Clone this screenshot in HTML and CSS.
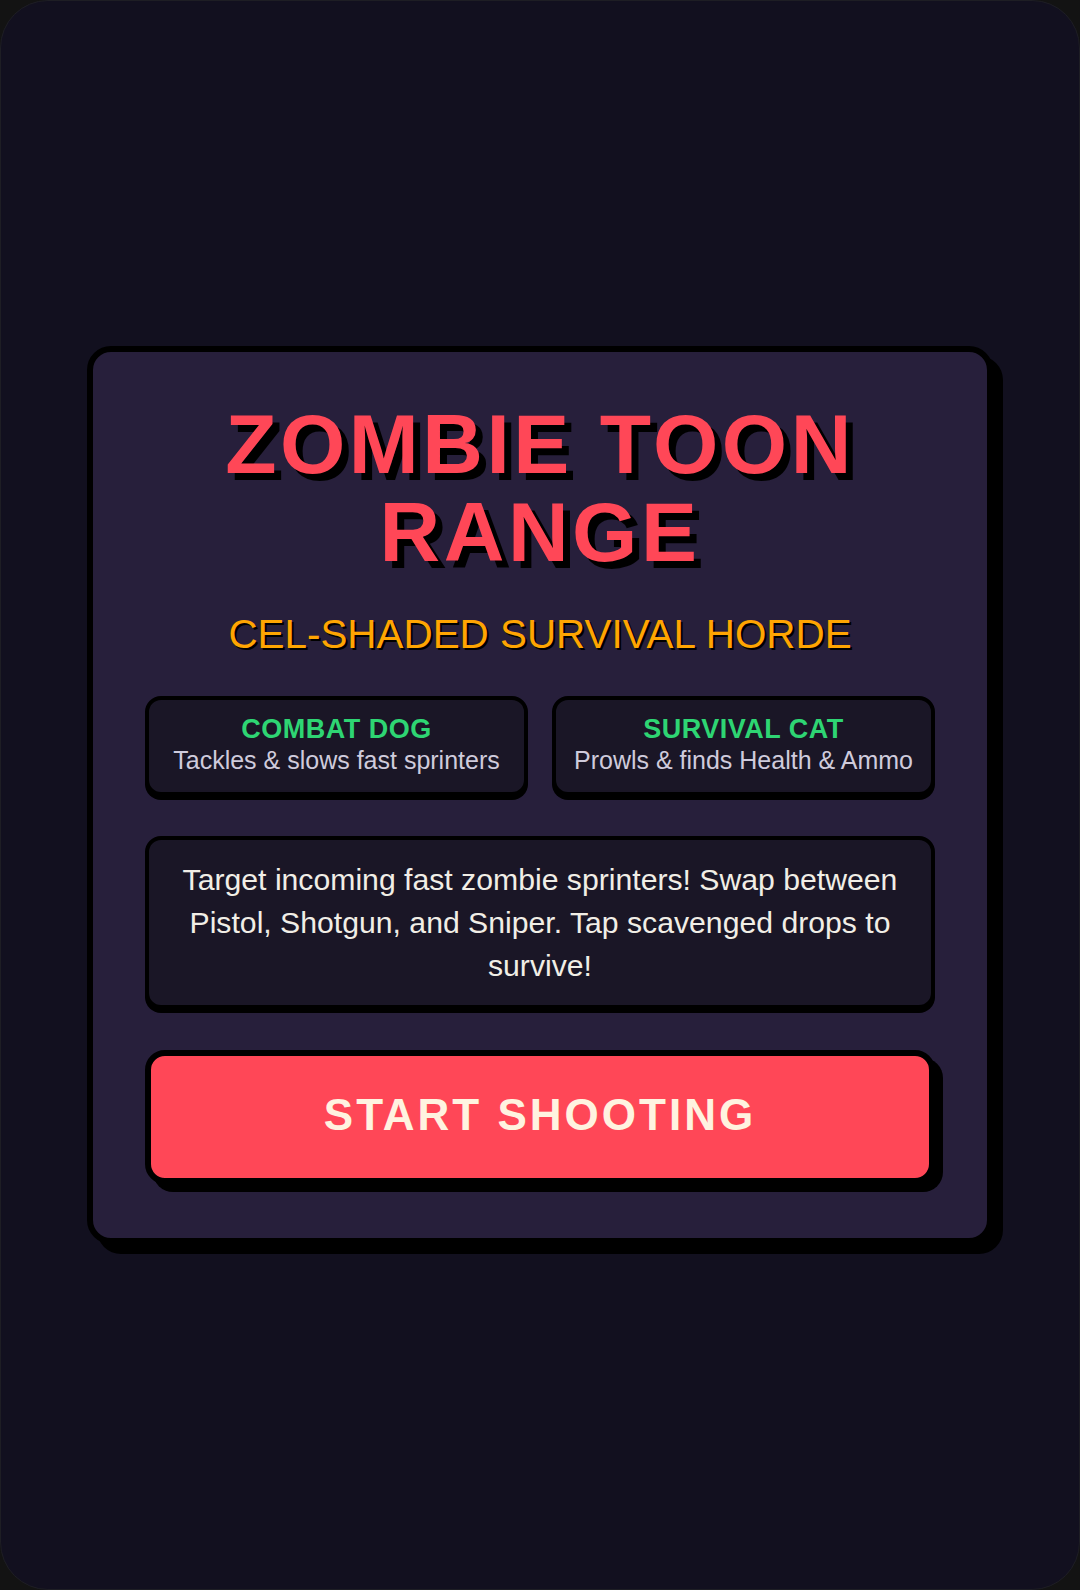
FILE: index.html
```html
<!DOCTYPE html>
<html lang="en">
<head>
<meta charset="utf-8">
<title>Zombie Toon Range</title>
<link rel="stylesheet" href="styles.css">
</head>
<body>
<div class="screen">
  <section class="menu">
    <h1 class="title">ZOMBIE TOON<br>RANGE</h1>
    <p class="tagline">CEL-SHADED SURVIVAL HORDE</p>
    <div class="companions">
      <div class="pet">
        <div class="pet-name">COMBAT DOG</div>
        <div class="pet-desc">Tackles &amp; slows fast sprinters</div>
      </div>
      <div class="pet">
        <div class="pet-name">SURVIVAL CAT</div>
        <div class="pet-desc">Prowls &amp; finds Health &amp; Ammo</div>
      </div>
    </div>
    <p class="briefing">Target incoming fast zombie sprinters! Swap between Pistol, Shotgun, and Sniper. Tap scavenged drops to survive!</p>
    <button class="start" type="button">START SHOOTING</button>
  </section>
</div>
</body>
</html>
```
FILE: styles.css
```css
* {
  box-sizing: border-box;
}

html,
body {
  margin: 0;
  padding: 0;
  background: #131313;
}

body {
  font-family: "Liberation Sans", Arial, sans-serif;
}

.screen {
  width: 1080px;
  height: 1590px;
  background: #12101f;
  border-radius: 48px;
  border: 1px solid #1e1e24;
  display: flex;
  align-items: center;
  justify-content: center;
}

.menu {
  width: 906px;
  background: #271f3b;
  border: 6px solid #000;
  border-radius: 24px;
  box-shadow: 10px 10px 0 #000;
  padding: 48px 52px 54px;
  display: flex;
  flex-direction: column;
  text-align: center;
}

.title {
  margin: 0;
  font-size: 84px;
  line-height: 88px;
  font-weight: 700;
  letter-spacing: 3.5px;
  color: #ff4757;
  text-shadow: 7px 7px 0 #000;
}

.tagline {
  margin: 35px 0 0;
  font-size: 40.4px;
  line-height: 46px;
  color: #ffa502;
  text-shadow: 2px 2px 0 #000;
}

.companions {
  margin-top: 39px;
  display: grid;
  grid-template-columns: 1fr 1fr;
  gap: 24px;
}

.pet {
  background: #1a1626;
  border: 4px solid #000;
  border-radius: 16px;
  box-shadow: 0 4px 0 #000;
  padding: 14px 8px 16px;
}

.pet-name {
  font-size: 27px;
  line-height: 30px;
  font-weight: 700;
  letter-spacing: 0.5px;
  color: #2ed573;
}

.pet-desc {
  font-size: 25px;
  line-height: 32px;
  color: #cfcbdc;
}

.briefing {
  margin: 40px 0 0;
  background: #1a1626;
  border: 4px solid #000;
  border-radius: 16px;
  box-shadow: 0 4px 0 #000;
  padding: 18px 24px 18px;
  font-size: 30.2px;
  line-height: 43px;
  color: #f1eee6;
}

.start {
  margin-top: 41px;
  height: 134px;
  padding: 0 0 4px;
  background: #ff4757;
  border: 6px solid #000;
  border-radius: 20px;
  box-shadow: 8px 8px 0 #000;
  font-family: inherit;
  font-size: 44px;
  font-weight: 700;
  letter-spacing: 3px;
  color: #fff3e0;
  cursor: pointer;
}
```
